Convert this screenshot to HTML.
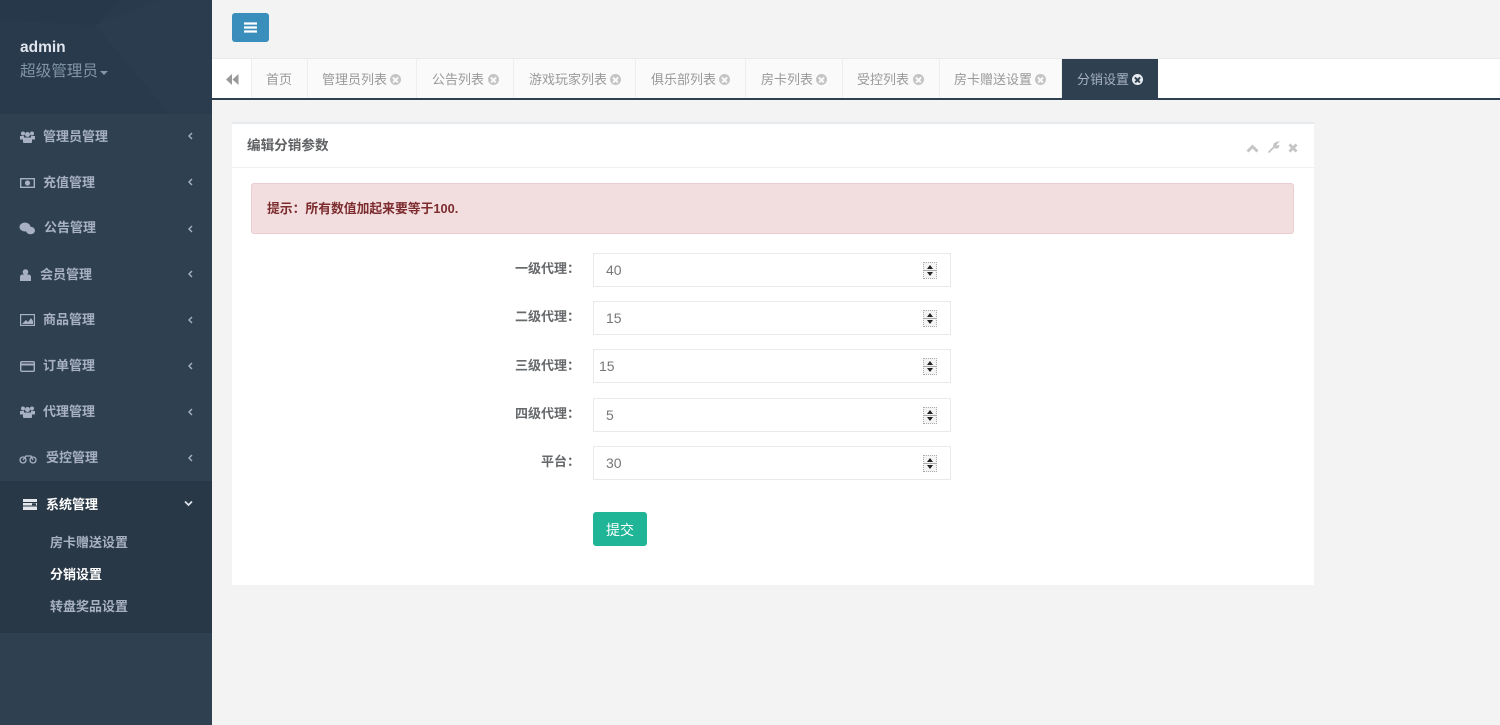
<!DOCTYPE html>
<html lang="zh"><head><meta charset="utf-8"><title>分销设置</title>
<style>
*{box-sizing:border-box}
html,body{margin:0;padding:0;width:1500px;height:725px;overflow:hidden;background:#f3f3f4;font-family:"Liberation Sans","Noto Sans CJK SC",sans-serif;font-size:13px;color:#676a6c}
div,a,span,label{position:absolute;white-space:nowrap}
svg{position:absolute;display:block}
.side{left:0;top:0;width:212px;height:725px;background:#2f4050}
.prof{left:0;top:0;width:212px;height:114px;background:#283a4b;overflow:hidden}
.mi{left:0;width:212px;height:20px;line-height:20px;color:#a7b1c2;font-weight:bold;font-size:13px}
.mi span.t{top:1px}
.sub{left:50px;color:#a7b1c2;font-weight:bold;font-size:13px;line-height:20px}
.tabs{left:212px;top:58px;width:1288px;height:42px;background:#fff;border-top:1px solid #e7eaec;border-bottom:2px solid #2f4050}
.tab{top:0;height:39px;line-height:42px;background:#fafafa;border-right:1px solid #eee;color:#999;font-size:13px}
.tab span{left:15px}
.tab span.l14{left:14px}
.x{width:11px;height:11px;border-radius:50%;background:#c4c4c4;top:15px;position:absolute}
.x:before,.x:after{content:"";position:absolute;left:2px;top:4.7px;width:7px;height:1.6px;background:#fafafa;transform:rotate(45deg)}
.x:after{transform:rotate(-45deg)}
.xa{background:#e8ebef}
.xa:before,.xa:after{background:#2f4050}
.lab{width:120px;left:460px;text-align:right;font-weight:bold;font-size:13px;color:#676a6c;line-height:20px}
.inp{left:593px;width:358px;height:34px;background:#fff;border:1px solid #e8e9ea;font-size:14px;line-height:33px;color:#777}
.spin{left:329px;top:8px;width:14px;height:17px;border:1px dotted #aaa;background:#f4f4f4}
.spin:before{content:"";position:absolute;left:3px;top:2px;border:3.5px solid transparent;border-top:0;border-bottom:4px solid #222}
.spin:after{content:"";position:absolute;left:3px;bottom:2px;border:3.5px solid transparent;border-bottom:0;border-top:4px solid #222}
.spin i{position:absolute;left:0;top:7px;width:12px;height:1px;background:#aaa}
</style></head><body>
<div class="side">
 <div class="prof">
  <svg width="212" height="114" style="left:0;top:0"><polygon points="95,25 160,0 212,0 212,114 170,114" fill="#2c3e50" opacity=".6"/><polygon points="0,0 120,0 95,25 0,20" fill="#24364a" opacity=".5"/></svg>
  <span style="left:20px;top:38px;color:#dfe4ed;font-weight:bold;font-size:15.5px;line-height:18px;margin-top:1px">admin</span>
  <span style="left:20px;top:62px;color:#8095a8;font-size:15.6px;line-height:20px">超级管理员</span>
  <span style="left:100px;top:71px;border:4px solid transparent;border-top:4px solid #8095a8;border-bottom:0"></span>
 </div>

 <div class="mi" style="top:127px"><svg width="15" height="12" style="left:20px;top:4px" viewBox="0 0 15 12"><circle cx="3" cy="2.5" r="2" fill="#a7b1c2"/><circle cx="12" cy="2.5" r="2" fill="#a7b1c2"/><circle cx="7.5" cy="3.5" r="2.5" fill="#a7b1c2"/><rect x="0" y="5" width="4" height="3.5" fill="#a7b1c2"/><rect x="11" y="5" width="4" height="3.5" fill="#a7b1c2"/><rect x="3" y="6.5" width="9" height="5.5" rx="1" fill="#a7b1c2"/></svg><span class="t" style="left:43px;top:0">管理员管理</span><svg width="6" height="8" style="left:187px;top:5px"><path d="M5 1L2 4l3 3" fill="none" stroke="#a7b1c2" stroke-width="1.4"/></svg></div>
 <div class="mi" style="top:173px"><svg width="15" height="10" style="left:20px;top:5px"><rect x=".7" y=".7" width="13.6" height="8.6" fill="none" stroke="#a7b1c2" stroke-width="1.4"/><circle cx="7.5" cy="5" r="2.6" fill="#a7b1c2"/></svg><span class="t" style="left:43px;top:0">充值管理</span><svg width="6" height="8" style="left:187px;top:5px"><path d="M5 1L2 4l3 3" fill="none" stroke="#a7b1c2" stroke-width="1.4"/></svg></div>
 <div class="mi" style="top:218px"><svg width="16" height="13" style="left:19px;top:4px"><ellipse cx="6" cy="5" rx="5.5" ry="4.5" fill="#a7b1c2"/><ellipse cx="11.5" cy="8.5" rx="4.5" ry="3.8" fill="#a7b1c2"/></svg><span class="t" style="left:44px;top:0">公告管理</span><svg width="6" height="8" style="left:187px;top:7px"><path d="M5 1L2 4l3 3" fill="none" stroke="#a7b1c2" stroke-width="1.4"/></svg></div>
 <div class="mi" style="top:265px"><svg width="11" height="12" style="left:20px;top:4px"><circle cx="5.5" cy="3" r="2.8" fill="#a7b1c2"/><path d="M0 12V8q0-2.500 3-2.500h5q3 0 3 2.500v4z" fill="#a7b1c2"/></svg><span class="t" style="left:40px;top:0">会员管理</span><svg width="6" height="8" style="left:187px;top:5px"><path d="M5 1L2 4l3 3" fill="none" stroke="#a7b1c2" stroke-width="1.4"/></svg></div>
 <div class="mi" style="top:310px"><svg width="15" height="12" style="left:20px;top:4px"><rect x=".6" y=".6" width="13.8" height="10.800" fill="none" stroke="#a7b1c2" stroke-width="1.2"/><path d="M2 10l4-4 2 2 3-4 2 3v3z" fill="#a7b1c2"/></svg><span class="t" style="left:43px;top:0">商品管理</span><svg width="6" height="8" style="left:187px;top:6px"><path d="M5 1L2 4l3 3" fill="none" stroke="#a7b1c2" stroke-width="1.4"/></svg></div>
 <div class="mi" style="top:356px"><svg width="15" height="11" style="left:20px;top:5px"><rect x=".7" y=".7" width="13.600" height="9.600" rx="1" fill="none" stroke="#a7b1c2" stroke-width="1.4"/><rect x="1" y="2.500" width="13" height="2" fill="#a7b1c2"/></svg><span class="t" style="left:43px;top:0">订单管理</span><svg width="6" height="8" style="left:187px;top:6px"><path d="M5 1L2 4l3 3" fill="none" stroke="#a7b1c2" stroke-width="1.4"/></svg></div>
 <div class="mi" style="top:402px"><svg width="15" height="12" style="left:20px;top:4px" viewBox="0 0 15 12"><circle cx="3" cy="2.500" r="2" fill="#a7b1c2"/><circle cx="12" cy="2.500" r="2" fill="#a7b1c2"/><circle cx="7.500" cy="3.500" r="2.500" fill="#a7b1c2"/><rect x="0" y="5" width="4" height="3.500" fill="#a7b1c2"/><rect x="11" y="5" width="4" height="3.500" fill="#a7b1c2"/><rect x="3" y="6.500" width="9" height="5.500" rx="1" fill="#a7b1c2"/></svg><span class="t" style="left:43px;top:0">代理管理</span><svg width="6" height="8" style="left:187px;top:6px"><path d="M5 1L2 4l3 3" fill="none" stroke="#a7b1c2" stroke-width="1.4"/></svg></div>
 <div class="mi" style="top:448px"><svg width="18" height="10" style="left:19px;top:6px"><circle cx="4" cy="6" r="3" fill="none" stroke="#a7b1c2" stroke-width="1.300"/><circle cx="14" cy="6" r="3" fill="none" stroke="#a7b1c2" stroke-width="1.300"/><path d="M4 6l3-4h5l2 4" fill="none" stroke="#a7b1c2" stroke-width="1.300"/></svg><span class="t" style="left:46px;top:0">受控管理</span><svg width="6" height="8" style="left:187px;top:6px"><path d="M5 1L2 4l3 3" fill="none" stroke="#a7b1c2" stroke-width="1.4"/></svg></div>

 <div style="left:0;top:481px;width:212px;height:152px;background:#293846"></div>
 <div class="mi" style="top:495px;color:#fff"><svg width="14" height="11" style="left:23px;top:4px"><rect width="14" height="11" fill="#e4e7ec"/><path d="M0 3.500h14M0 7h14" stroke="#293846" stroke-width="1"/><rect x="9" y="4.300" width="4" height="2" fill="#293846"/></svg><span class="t" style="left:46px;top:0">系统管理</span><svg width="9" height="7" style="left:184px;top:5px"><path d="M1 1.500l3.500 3.500 3.500-3.500" fill="none" stroke="#dfe4ed" stroke-width="1.700"/></svg></div>
 <div class="sub" style="top:533px">房卡赠送设置</div>
 <div class="sub" style="top:565px;color:#fff">分销设置</div>
 <div class="sub" style="top:597px">转盘奖品设置</div>
</div>

<div style="left:232px;top:13px;width:37px;height:29px;background:#3a8ebb;border-radius:3px"><svg width="13" height="11" style="left:12px;top:9px"><path d="M0 1.500h13M0 5.500h13M0 9.500h13" stroke="#fff" stroke-width="2.300"/></svg></div>

<div class="tabs">
 <div style="left:0;top:0;width:40px;height:39px;background:#fff;border-right:1px solid #eee"><svg width="13" height="11" style="left:14px;top:15px"><path d="M6 0v11L0 5.500zM12.500 0v11l-6-5.500z" fill="#999"/></svg></div>
 <div class="tab" style="left:40px;width:56px"><span class="l14">首页</span></div>
 <div class="tab" style="left:96px;width:109px"><span class="l14">管理员列表</span><i class="x" style="left:82px"></i></div>
 <div class="tab" style="left:205px;width:97px"><span>公告列表</span><i class="x" style="left:71px"></i></div>
 <div class="tab" style="left:302px;width:122px"><span>游戏玩家列表</span><i class="x" style="left:96px"></i></div>
 <div class="tab" style="left:424px;width:110px"><span>俱乐部列表</span><i class="x" style="left:83px"></i></div>
 <div class="tab" style="left:534px;width:97px"><span>房卡列表</span><i class="x" style="left:70px"></i></div>
 <div class="tab" style="left:631px;width:97px"><span class="l14">受控列表</span><i class="x" style="left:70px"></i></div>
 <div class="tab" style="left:728px;width:122px"><span class="l14">房卡赠送设置</span><i class="x" style="left:95px"></i></div>
 <div class="tab" style="left:850px;width:96px;background:#2f4050;color:#a7b1c2;border:0;height:40px"><span>分销设置</span><i class="x xa" style="left:70px"></i></div>
</div>

<div style="left:232px;top:122px;width:1082px;height:463px;background:#fff;border-top:2px solid #e7eaec"></div>
<div style="left:232px;top:167px;width:1082px;height:1px;background:#eef0f1"></div>
<div style="left:247px;top:136px;font-weight:bold;font-size:13.6px;line-height:20px;color:#5f6163">编辑分销参数</div>
<svg width="13" height="9" style="left:1246px;top:144px"><path d="M1.500 7.500L6.500 2.500l5 5" fill="none" stroke="#c4c4c4" stroke-width="2.800"/></svg>
<svg width="13" height="13" style="left:1267px;top:141px" viewBox="0 0 13 13"><path d="M1.500 11.500L7 6M7 6Q6.500 2.500 10.500 1.500L8.500 3.800l1 1.700 2-.5Q11 8 7 6z" fill="#c4c4c4" stroke="#c4c4c4" stroke-width="1.700"/></svg>
<svg width="10" height="10" style="left:1288px;top:143px"><path d="M1.500 1.500l7 7M8.500 1.500l-7 7" stroke="#c4c4c4" stroke-width="2.800"/></svg>

<div style="left:251px;top:183px;width:1043px;height:51px;background:#f2dede;border:1px solid #ebccd1;border-radius:3px"></div>
<div style="left:267px;top:199px;font-weight:bold;font-size:12.8px;line-height:20px;color:#7c2c2e">提示：所有数值加起来要等于100.</div>

<div class="lab" style="top:259px">一级代理：</div>
<div class="inp" style="top:253px"><span style="left:12px">40</span><div class="spin"><i></i></div></div>
<div class="lab" style="top:307px">二级代理：</div>
<div class="inp" style="top:301px"><span style="left:12px">15</span><div class="spin"><i></i></div></div>
<div class="lab" style="top:356px">三级代理：</div>
<div class="inp" style="top:349px"><span style="left:5px">15</span><div class="spin"><i></i></div></div>
<div class="lab" style="top:404px">四级代理：</div>
<div class="inp" style="top:398px"><span style="left:12px">5</span><div class="spin"><i></i></div></div>
<div class="lab" style="top:452px">平台：</div>
<div class="inp" style="top:446px"><span style="left:12px">30</span><div class="spin"><i></i></div></div>

<div style="left:593px;top:512px;width:54px;height:34px;background:#1ab394;border-radius:3px;color:#fff;text-align:center;line-height:36px;font-size:14px;opacity:.97">提交</div>
</body></html>
